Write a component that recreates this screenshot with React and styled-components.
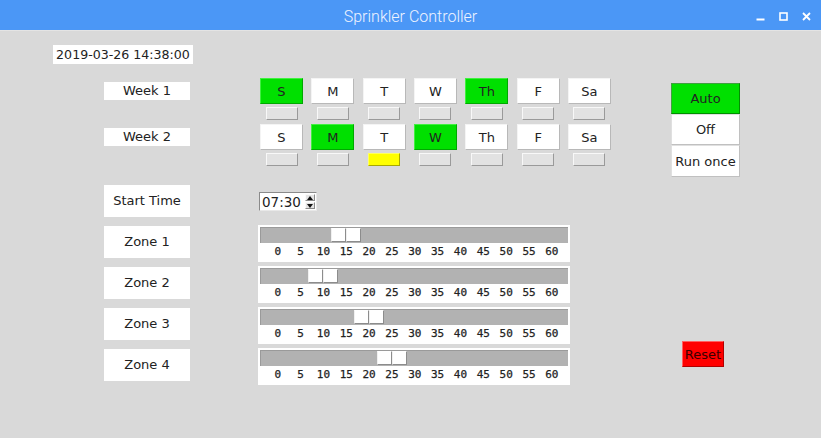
import React from "react";
import styled, { createGlobalStyle } from "styled-components";

const Global = createGlobalStyle`
  html, body { margin: 0; padding: 0; height: 100%; }
  body { background: #d9d9d9; font-family: "DejaVu Sans", sans-serif; }
  #root { min-height: 100vh; }
`;

const Window = styled.div`
  width: 821px;
  height: 438px;
  background: #d9d9d9;
  overflow: hidden;
`;

const TitleBar = styled.div`
  height: 30px;
  background: #4b97f6;
  display: flex;
  align-items: center;
  justify-content: center;
  position: relative;
  border-bottom: 1px solid #e4e4e4;
`;

const Title = styled.div`
  font-family: Roboto, "Liberation Sans", sans-serif;
  font-weight: 300;
  font-size: 16px;
  color: #eef3ff;
  margin-top: 2px;
`;

const Controls = styled.div`
  position: absolute;
  right: 10px;
  top: 12px;
  display: flex;
  gap: 14px;
  align-items: center;
`;

const Body = styled.div`
  display: flex;
  flex-direction: column;
`;

const DateRow = styled.div`
  padding: 14px 0 0 53px;
  display: flex;
`;

const DateLabel = styled.div`
  background: #fff;
  width: 140px;
  height: 19px;
  font-size: 12.6px;
  line-height: 19px;
  text-align: center;
  color: #222;
`;

const Main = styled.div`
  display: flex;
  padding: 14px 0 0 104px;
`;

const LeftBlock = styled.div`
  width: 466px;
  flex: none;
  display: flex;
  flex-direction: column;
`;

const Row = styled.div`
  display: flex;
  align-items: flex-start;
  gap: 70px;
  margin-top: ${(p) => p.$mt || 0}px;
  height: ${(p) => (p.$h ? `${p.$h}px` : "auto")};
`;

const Label = styled.div`
  flex: none;
  width: 86px;
  height: ${(p) => (p.$small ? 18 : 32)}px;
  line-height: ${(p) => (p.$small ? 18 : 32)}px;
  margin-top: ${(p) => (p.$small ? 4 : 0)}px;
  background: #fff;
  text-align: center;
  font-size: 13px;
  color: #222;
  white-space: nowrap;
`;

const DayGrid = styled.div`
  display: flex;
  gap: 8.33px;
`;

const DayCol = styled.div`
  display: flex;
  flex-direction: column;
  align-items: center;
  gap: 3px;
`;

const DayButton = styled.div`
  width: 43px;
  height: 26px;
  box-sizing: border-box;
  background: ${(p) => (p.$on ? "#00e000" : "#ffffff")};
  border: 1px solid;
  border-color: ${(p) =>
    p.$on ? "#40f040 #00a800 #00a800 #40f040" : "#f4f4f4 #b8b8b8 #b8b8b8 #f4f4f4"};
  display: flex;
  align-items: center;
  justify-content: center;
  font-size: 13px;
  color: #222;
`;

const Indicator = styled.div`
  width: 32px;
  height: 13px;
  box-sizing: border-box;
  background: ${(p) => (p.$on ? "#ffff00" : "#e2e2e2")};
  border: 1px solid;
  border-color: ${(p) =>
    p.$on ? "#ffff60 #a8a800 #a8a800 #ffff60" : "#f8f8f8 #9a9a9a #9a9a9a #f8f8f8"};
`;

const SpinBox = styled.div`
  margin-left: -1px;
  margin-top: 7px;
  width: 58px;
  height: 19px;
  box-sizing: border-box;
  background: #fff;
  border: 1px solid;
  border-color: #8a8a8a #e8e8e8 #e8e8e8 #8a8a8a;
  display: flex;
  align-items: center;
  justify-content: space-between;
  padding: 0 1px 0 2px;
`;

const SpinText = styled.span`
  font-size: 13.5px;
  color: #222;
`;

const SpinArrows = styled.div`
  width: 10px;
  height: 15px;
  display: flex;
  flex-direction: column;
  gap: 1px;
`;

const Arrow = styled.div`
  flex: 1;
  background: #e4e4e4;
  border: 1px solid;
  border-color: #fafafa #8a8a8a #8a8a8a #fafafa;
  box-sizing: border-box;
  display: flex;
  align-items: center;
  justify-content: center;
`;

const SliderBox = styled.div`
  flex: none;
  margin-left: -2px;
  margin-top: -1px;
  width: 312px;
  height: 37px;
  box-sizing: border-box;
  background: #fff;
  padding: 2px 2px 0 2px;
  display: flex;
  flex-direction: column;
`;

const Trough = styled.div`
  position: relative;
  height: 16px;
  box-sizing: border-box;
  background: #b2b2b2;
  border-top: 1px solid #9a9a9a;
  border-left: 1px solid #9a9a9a;
`;

const Handle = styled.div`
  position: absolute;
  top: 0;
  height: 14px;
  width: 30px;
  display: flex;
`;

const HandleHalf = styled.div`
  flex: 1;
  background: #ffffff;
  border: 1px solid;
  border-color: #ffffff #8c8c8c #8c8c8c #f0f0f0;
  box-sizing: border-box;
`;

const Ticks = styled.div`
  display: flex;
  padding-left: 6.3px;
  height: 17px;
  align-items: center;
`;

const Tick = styled.span`
  width: 22.85px;
  text-align: center;
  font-family: "DejaVu Sans Mono", monospace;
  font-size: 11px;
  color: #222;
  flex: none;
  -webkit-text-stroke: 0.25px #222;
`;

const RightBlock = styled.div`
  margin-left: 101px;
  padding-top: 5px;
  display: flex;
  flex-direction: column;
  align-items: flex-start;
`;

const ModeButton = styled.div`
  width: 69px;
  height: ${(p) => p.$h}px;
  box-sizing: border-box;
  background: ${(p) => (p.$on ? "#00e000" : "#ffffff")};
  border: 1px solid;
  border-color: ${(p) =>
    p.$on ? "#40a040 #009000 #009000 #40a040" : "#e0e0e0 #c0c0c0 #c0c0c0 #e0e0e0"};
  display: flex;
  align-items: center;
  justify-content: center;
  font-size: 13px;
  color: #222;
`;

const ResetButton = styled.div`
  margin: 164px 0 0 11px;
  width: 42px;
  height: 26px;
  box-sizing: border-box;
  background: #ff0000;
  border: 1px solid;
  border-color: #ff6060 #b00000 #b00000 #ff6060;
  display: flex;
  align-items: center;
  justify-content: center;
  font-size: 13px;
  color: #3a0000;
`;

const days = ["S", "M", "T", "W", "Th", "F", "Sa"];
const weeks = [
  { name: "Week 1", on: [0, 4], ind: [] },
  { name: "Week 2", on: [1, 3], ind: [2] },
];
const zones = [
  { name: "Zone 1", value: 15 },
  { name: "Zone 2", value: 10 },
  { name: "Zone 3", value: 20 },
  { name: "Zone 4", value: 25 },
];
const ticks = [0, 5, 10, 15, 20, 25, 30, 35, 40, 45, 50, 55, 60];

function Slider({ value }) {
  const center = 277.7 + value * 4.57 - 260;
  return (
    <SliderBox>
      <Trough>
        <Handle style={{ left: `${center - 16}px` }}>
          <HandleHalf />
          <HandleHalf />
        </Handle>
      </Trough>
      <Ticks>
        {ticks.map((t) => (
          <Tick key={t}>{t}</Tick>
        ))}
      </Ticks>
    </SliderBox>
  );
}

export default function App() {
  return (
    <Window>
      <Global />
      <TitleBar>
        <Title>Sprinkler Controller</Title>
        <Controls>
          <svg width="9" height="9" viewBox="0 0 9 9">
            <rect x="0.5" y="6.5" width="8" height="2" fill="#fff" />
          </svg>
          <svg width="9" height="9" viewBox="0 0 9 9">
            <rect x="1" y="1" width="7" height="7" fill="none" stroke="#fff" strokeWidth="1.6" />
          </svg>
          <svg width="9" height="9" viewBox="0 0 9 9">
            <path d="M1 1 L8 8 M8 1 L1 8" stroke="#fff" strokeWidth="1.8" />
          </svg>
        </Controls>
      </TitleBar>
      <Body>
        <DateRow>
          <DateLabel>2019-03-26 14:38:00</DateLabel>
        </DateRow>
        <Main>
          <LeftBlock>
            {weeks.map((w, wi) => (
              <Row key={w.name} $mt={wi === 0 ? 0 : 4}>
                <Label $small>{w.name}</Label>
                <DayGrid>
                  {days.map((d, i) => (
                    <DayCol key={d}>
                      <DayButton $on={w.on.includes(i)}>{d}</DayButton>
                      <Indicator $on={w.ind.includes(i)} />
                    </DayCol>
                  ))}
                </DayGrid>
              </Row>
            ))}
            <Row $mt={19}>
              <Label>Start Time</Label>
              <SpinBox>
                <SpinText>07:30</SpinText>
                <SpinArrows>
                  <Arrow>
                    <svg width="6" height="4" viewBox="0 0 6 4">
                      <path d="M0 4 L3 0 L6 4 Z" fill="#111" />
                    </svg>
                  </Arrow>
                  <Arrow>
                    <svg width="6" height="4" viewBox="0 0 6 4">
                      <path d="M0 0 L3 4 L6 0 Z" fill="#111" />
                    </svg>
                  </Arrow>
                </SpinArrows>
              </SpinBox>
            </Row>
            {zones.map((z) => (
              <Row key={z.name} $mt={9} $h={32}>
                <Label>{z.name}</Label>
                <Slider value={z.value} />
              </Row>
            ))}
          </LeftBlock>
          <RightBlock>
            <ModeButton $on $h={31}>Auto</ModeButton>
            <ModeButton $h={31}>Off</ModeButton>
            <ModeButton $h={32}>Run once</ModeButton>
            <ResetButton>Reset</ResetButton>
          </RightBlock>
        </Main>
      </Body>
    </Window>
  );
}
